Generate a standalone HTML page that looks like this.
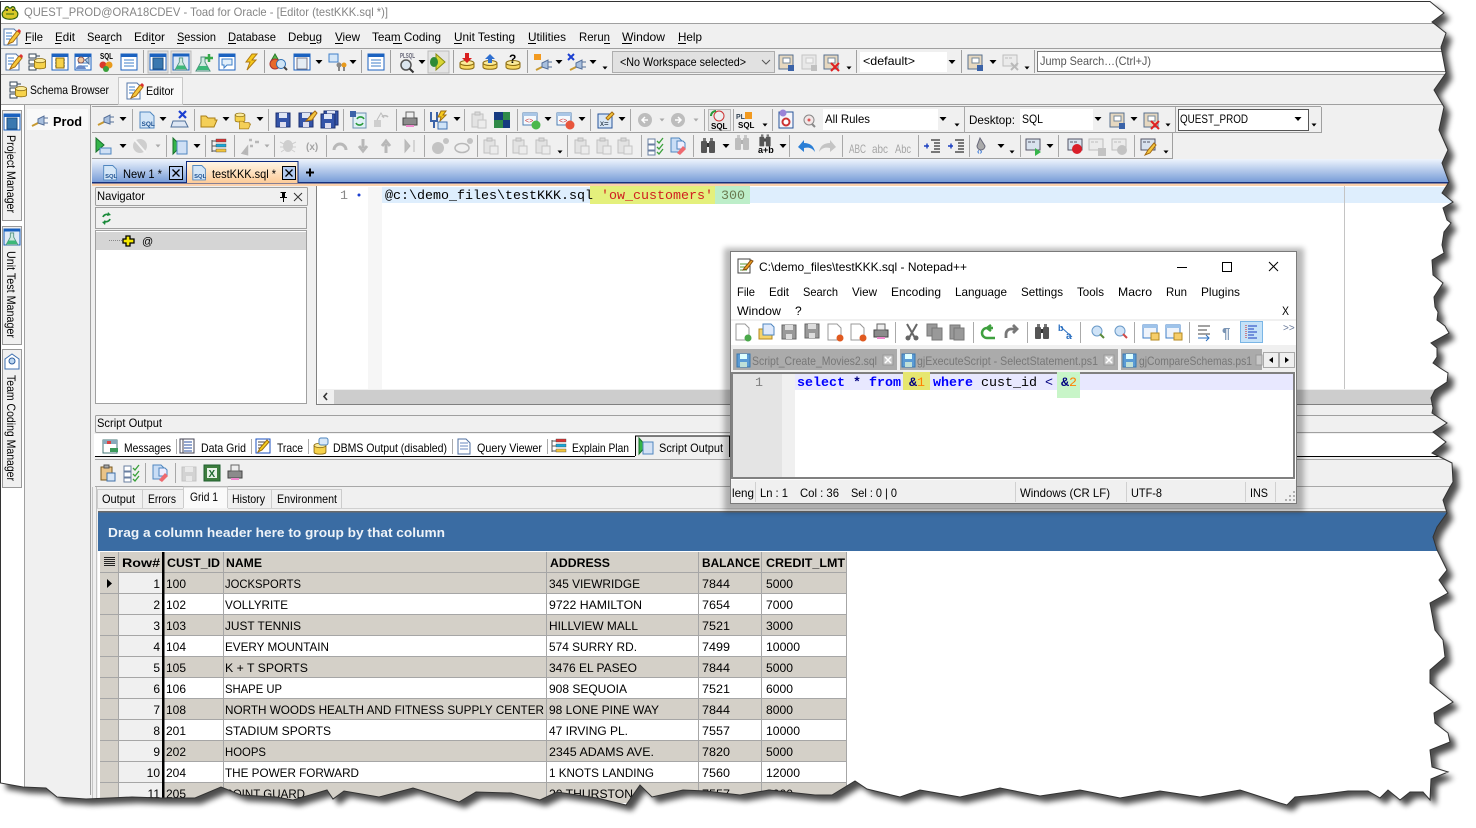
<!DOCTYPE html>
<html><head><meta charset="utf-8"><title>Toad for Oracle</title>
<style>
html,body{margin:0;padding:0;background:#fff;overflow:hidden}
svg{display:block;font-family:"Liberation Sans",sans-serif;font-size:12px;fill:#000}
.g{opacity:.32;filter:grayscale(1)}
.m{font-family:"Liberation Mono",monospace;font-size:13.33px}
.b{font-weight:bold}
</style></head><body>
<svg xmlns="http://www.w3.org/2000/svg" width="1476" height="828" viewBox="0 0 1476 828">
<defs>
<filter id="bl" x="-5%" y="-5%" width="110%" height="110%"><feGaussianBlur stdDeviation="3"/></filter>
<linearGradient id="band" x1="0" y1="0" x2="0" y2="1"><stop offset="0" stop-color="#eef4fd"/><stop offset="1" stop-color="#7399d6"/></linearGradient>
<linearGradient id="act" x1="0" y1="0" x2="0" y2="1"><stop offset="0" stop-color="#fff6e6"/><stop offset="1" stop-color="#fdcb98"/></linearGradient>
<clipPath id="pg"><polygon points="0,1 1430,1 1444,13 1432,22 1446,33 1441,47 1446,73 1434,90 1444,107 1439,130 1448,150 1442,163 1449,182 1442,193 1453,202 1443,208 1447,220 1451,223 1444,232 1442,245 1444,253 1432,260 1433,275 1443,283 1434,297 1435,307 1438,312 1437,320 1445,326 1449,333 1431,343 1437,348 1437,357 1433,363 1440,368 1448,373 1447,382 1435,390 1431,398 1433,408 1432,413 1447,423 1433,432 1446,442 1432,453 1452,463 1453,482 1450,487 1443,500 1447,513 1437,527 1433,537 1437,550 1447,570 1439,580 1448,593 1430,603 1435,630 1443,640 1445,657 1430,670 1430,683 1453,702 1434,713 1435,723 1448,733 1450,742 1430,750 1432,767 1448,772 1431,779 1430,800 1423,792 1410,792 1400,800 1388,790 1380,798 1368,791 1348,791 1317,795 1295,797 1287,805 1280,803 1240,790 1200,797 1160,791 1120,798 1080,790 1040,796 1000,788 960,797 920,790 900,797 867,789 855,781 832,795 815,795 769,790 740,795 706,791 683,790 652,797 640,785 626,805 597,798 557,792 540,800 511,793 476,792 459,802 436,795 413,788 379,797 344,791 333,799 327,790 293,800 276,797 241,795 221,787 195,798 161,798 132,797 109,798 86,799 57,797 46,788 23,787 0,783"/></clipPath>

<path id="ar" d="M-3.5,-2h7l-3.5,4z"/>
<path id="sa" d="M-2.5,-1.5h5l-2.5,3z"/>
<g id="win"><rect x="-8" y="-8" width="16" height="16" fill="#fff" stroke="#1b62c0"/><rect x="-8" y="-8" width="16" height="3" fill="#1b62c0"/><path d="M-5,-2h10M-5,1h10M-5,4h10" stroke="#3f7fc8"/></g>
<g id="book"><rect x="-8" y="-8" width="16" height="16" fill="#fff" stroke="#1b62c0"/><rect x="-8" y="-8" width="16" height="3" fill="#1b62c0"/><rect x="-5" y="-4" width="10" height="11" fill="#3a78b0" stroke="#1d4f80"/></g>
<g id="cyl"><path d="M-7,-3v8c0,3 14,3 14,0v-8z" fill="#f6d24a" stroke="#8a6a10"/><ellipse cy="-3" rx="7" ry="2.6" fill="#fbeb9a" stroke="#8a6a10"/></g>
<g id="pen"><path d="M-7,-8h10l3,3v13h-13z" fill="#fff" stroke="#5577aa"/><path d="M-5,-4h6M-5,-1h6M-5,2h4" stroke="#3f7fc8"/><path d="M-3,7l2,-4 7,-9 3,2 -7,9z" fill="#f6c83c" stroke="#a56a10"/><path d="M6,-6l3,2 1,-2 -2,-2z" fill="#d33"/></g>
<g id="sch"><rect x="-8" y="-8" width="7" height="4" fill="#fff" stroke="#345"/><rect x="-8" y="-2" width="7" height="4" fill="#fff" stroke="#345"/><rect x="-8" y="4" width="7" height="4" fill="#fff" stroke="#345"/><path d="M-1,-6h4" stroke="#345"/><g transform="translate(3,1) scale(.8)"><use href="#cyl"/></g></g>
<g id="flask"><path d="M-2,-6h4v5l5,9h-14l5,-9z" fill="#cfe9e0" stroke="#4f8f80"/><path d="M-4,3h8l2.500,4h-13z" fill="#3cb878"/></g>
<g id="wfl"><rect x="-8" y="-8" width="16" height="16" fill="#dfe9f6" stroke="#1b62c0"/><rect x="-8" y="-8" width="16" height="2.500" fill="#1b62c0"/><g transform="translate(0,1) scale(.85)"><use href="#flask"/></g></g>
<g id="chat"><rect x="-8" y="-8" width="16" height="16" fill="#fff" stroke="#1b62c0"/><rect x="-8" y="-8" width="16" height="3" fill="#1b62c0"/><path d="M-5,-3h10v6h-5l-3,3v-3h-2z" fill="#e2effa" stroke="#3f7fc8"/></g>
<path id="bolt" d="M2,-8h5l-5,6h4l-9,10 3,-8h-4z" fill="#f6c91c" stroke="#b07a10"/>
<g id="shp"><path d="M-3,-8l4,7h-8z" fill="#55b84a" stroke="#2a7a2a"/><circle cx="-3" cy="2" r="5" fill="#e86a2c" stroke="#a33"/><circle cx="3" cy="2" r="4.500" fill="#cfe5f7" stroke="#2d6fb5"/><path d="M6,5l3,3" stroke="#444" stroke-width="2"/></g>
<g id="mag"><circle r="5" fill="#dbe5ee" stroke="#555" stroke-width="1.500"/><path d="M3.500,3.500l4,4" stroke="#333" stroke-width="2"/></g>
<g id="ylw"><path d="M-7,1v4c0,3 14,3 14,0v-4z" fill="#f8d860" stroke="#8a6a10"/><ellipse cy="1" rx="7" ry="2.500" fill="#fbeb9a" stroke="#8a6a10"/></g>
<g id="plug"><path d="M-8,5l6,-3" stroke="#c89a30" stroke-width="2"/><path d="M-2,-2l6,-3v9l-6,-2z" fill="#a9c0de" stroke="#556f99"/><path d="M4,-3h4M4,2h4" stroke="#556f99"/></g>
<g id="sql"><path d="M-7,-8h10l4,4v12h-14z" fill="#d4e6f7" stroke="#4f86bf"/><text x="-5.500" y="6" style="font-size:6.500px;font-weight:bold;fill:#1b4f90">SQL</text></g>
<g id="sv"><rect x="-7" y="-7" width="14" height="14" fill="#3454a8" stroke="#1c2f70"/><rect x="-4" y="-7" width="8" height="5" fill="#dfe6f5"/><rect x="-3" y="2" width="6" height="5" fill="#dde"/></g>
<path id="fo" d="M-8,-4h5l2,2h7v2h2l-3,7h-13z" fill="#f4cf58" stroke="#a97e15"/>
<g id="gd"><rect x="-7" y="-7" width="14" height="15" fill="#fff" stroke="#6b7f9a"/><path d="M-7,-2h14M-7,3h14M-2,-7v15" stroke="#6b7f9a"/></g>
<g id="prt"><rect x="-7" y="-2" width="14" height="7" fill="#8b8b8b" stroke="#444"/><rect x="-4" y="-8" width="8" height="6" fill="#eee" stroke="#666"/><rect x="-4" y="5" width="8" height="2" fill="#e8c"/></g>
<g id="cir"><circle r="7" fill="#bdbdbd"/><path d="M3,0h-6M0,-3l-3,3 3,3" stroke="#fff" stroke-width="1.500" fill="none"/></g>
<g id="play"><path d="M-7,-8l8,7 -8,7z" fill="#35b54a" stroke="#17702a"/><rect x="-3" y="2" width="11" height="6" fill="#cfe0f5" stroke="#4f86bf"/></g>
<g id="tr"><path d="M-6,-6v12M-6,-5h4M-6,0h4M-6,5h4" stroke="#555"/><rect x="-2" y="-7" width="10" height="3" fill="#d33" stroke="#444" stroke-width=".4"/><rect x="-2" y="-2" width="10" height="3" fill="#19a7d8" stroke="#444" stroke-width=".4"/><rect x="-2" y="3" width="10" height="3" fill="#f2c43a" stroke="#444" stroke-width=".4"/></g>
<g id="bug"><ellipse rx="5" ry="6" fill="#888"/><path d="M-8,-4l4,2M8,-4l-4,2M-8,1h4M8,1h-4M-7,6l3,-2M7,6l-3,-2" stroke="#888"/></g>
<g id="cl"><rect x="-7" y="-6" width="11" height="13" fill="#eac489" stroke="#7a5a20"/><rect x="-1" y="0" width="8" height="8" fill="#d8e6f6" stroke="#3f70a8"/><path d="M-4,-8h5v3h-5z" fill="#aaa" stroke="#555"/></g>
<g id="ck"><rect x="-7" y="-7" width="7" height="5" fill="#fff" stroke="#6a7fa0"/><rect x="-7" y="-1" width="7" height="5" fill="#fff" stroke="#6a7fa0"/><rect x="-7" y="5" width="7" height="4" fill="#fff" stroke="#6a7fa0"/><path d="M2,-5l2,2 4,-5M2,1l2,2 4,-5M2,6l2,2 4,-5" stroke="#3aa03a" fill="none" stroke-width="1.300"/></g>
<g id="er"><path d="M-7,-8h8l3,3v11h-11z" fill="#c9ddf5" stroke="#4f86bf"/><path d="M-1,-5h6l2,2v6h-8z" fill="#eef" stroke="#4f86bf"/><path d="M-1,7l6,-7 3,3 -6,6z" fill="#ee6a70"/></g>
<g id="bin"><rect x="-7" y="-5" width="6" height="12" rx="1" fill="#555"/><rect x="1" y="-5" width="6" height="12" rx="1" fill="#555"/><rect x="-5" y="-8" width="3" height="3" fill="#777"/><rect x="2" y="-8" width="3" height="3" fill="#777"/><rect x="-1" y="-3" width="2" height="4" fill="#333"/></g>
<g id="cog"><rect x="-7" y="-7" width="14" height="11" fill="#d8e2ee" stroke="#556"/><path d="M-5,-4h3M-1,-4h3" stroke="#556"/></g>
<g id="rx"><use href="#cog"/><path d="M1,1l7,7M8,1l-7,7" stroke="#e02020" stroke-width="2"/></g>
<g id="cfg"><rect x="-7" y="-7" width="14" height="14" fill="#e6d8c0" stroke="#58708e"/><rect x="-3" y="-4" width="7" height="5" fill="#fff" stroke="#789"/><rect x="2" y="3" width="6" height="6" fill="#3b63a8"/></g>
<g id="cfx"><rect x="-7" y="-7" width="14" height="14" fill="#e6d8c0" stroke="#58708e"/><rect x="-3" y="-4" width="7" height="5" fill="#fff" stroke="#789"/><path d="M0,1l8,8M8,1l-8,8" stroke="#e02020" stroke-width="2"/></g>
<g id="ind"><path d="M-1,-6h9M2,-3h6M2,0h6M2,3h6M-1,6h9" stroke="#000"/><path d="M-8,0h5M-5,-2.500v5" stroke="#1b3fc0" stroke-width="1.400"/></g>
<g id="nd"><path d="M-7,-8h9l4,4v12h-13z" fill="#fff" stroke="#999"/><circle cx="5" cy="6" r="3.500" fill="#4aa84a"/></g>
<g id="nf"><rect x="-7" y="-3" width="13" height="10" fill="#f6d36a" stroke="#b58a20"/><path d="M-3,-8h8l3,3v8h-11z" fill="#dfeafc" stroke="#4f86bf"/></g>
<g id="ns"><rect x="-7" y="-7" width="14" height="14" fill="#999" stroke="#666"/><rect x="-4" y="-7" width="8" height="5" fill="#ddd"/><rect x="-3" y="2" width="6" height="5" fill="#ddd"/></g>
<g id="fl"><rect x="-6" y="-6" width="13" height="13" fill="#5b9bd5" stroke="#3a78b0"/><rect x="-3" y="-6" width="7" height="5" fill="#dff"/><rect x="-3" y="2" width="7" height="5" fill="#bfe0d8"/></g>
<g id="nx"><path d="M-7,-8h9l4,4v12h-13z" fill="#fff" stroke="#999"/><circle cx="5" cy="6" r="3.500" fill="#e05a20"/></g>
<g id="lk"><rect x="-7" y="-7" width="14" height="13" fill="#eef3fb" stroke="#3f7fc8"/><rect x="-7" y="-7" width="14" height="3" fill="#9ec3ea"/><rect x="1" y="1" width="8" height="7" fill="#f6cd6a" stroke="#b58a20"/></g>
</defs>

<rect width="1476" height="828" fill="#fff"/>
<g filter="url(#bl)" opacity=".7" transform="translate(6,6)"><polygon fill="#000" points="900,797 867,789 855,781 832,795 815,795 769,790 740,795 706,791 683,790 652,797 640,785 626,805 597,798 557,792 540,800 511,793 476,792 459,802 436,795 413,788 379,797 344,791 333,799 327,790 293,800 276,797 241,795 221,787 195,798 161,798 132,797 109,798 86,799 57,797 46,788 23,787 0,783 0,1 1430,1 1444,13 1432,22 1446,33 1441,47 1446,73 1434,90 1444,107 1439,130 1448,150 1442,163 1449,182 1442,193 1453,202 1443,208 1447,220 1451,223 1444,232 1442,245 1444,253 1432,260 1433,275 1443,283 1434,297 1435,307 1438,312 1437,320 1445,326 1449,333 1431,343 1437,348 1437,357 1433,363 1440,368 1448,373 1447,382 1435,390 1431,398 1433,408 1432,413 1447,423 1433,432 1446,442 1432,453 1452,463 1453,482 1450,487 1443,500 1447,513 1437,527 1433,537 1437,550 1447,570 1439,580 1448,593 1430,603 1435,630 1443,640 1445,657 1430,670 1430,683 1453,702 1434,713 1435,723 1448,733 1450,742 1430,750 1432,767 1448,772 1431,779 1430,800 1423,792 1410,792 1400,800 1388,790 1380,798 1368,791 1348,791 1317,795 1295,797 1287,805 1280,803 1240,790 1200,797 1160,791 1120,798 1080,790 1040,796 1000,788 960,797 920,790"/></g>

<g clip-path="url(#pg)">
<rect width="1476" height="828" fill="#f0f0f0"/>
<!-- title -->
<rect y="0" width="1476" height="23" fill="#fff"/>
<path d="M0,23.500H1476M0,48.500H1476M0,74.500H1476M0,104.500H1476" stroke="#a0a0a0" fill="none"/>
<g transform="translate(10,12)"><path d="M-7,5c-2,-4 0,-6 2,-7 0,-4 3,-4 4,-2h2c1,-2 4,-2 4,2 2,1 4,3 2,7 -3,3 -11,3 -14,0z" fill="#d8c828" stroke="#2f5f10" stroke-width="1.200"/><path d="M-4,2h8" stroke="#2f6a10"/><circle cx="-3" cy="-2" r="1" fill="#222"/><circle cx="3" cy="-2" r="1" fill="#222"/></g>
<text x="24" y="16" fill="#858585" textLength="364" lengthAdjust="spacingAndGlyphs" style="fill:#858585">QUEST_PROD@ORA18CDEV - Toad for Oracle - [Editor (testKKK.sql *)]</text>

<!-- menu -->
<use href="#pen" x="11" y="37"/>
<g>
<text x="25" y="41" textLength="18" lengthAdjust="spacingAndGlyphs">File</text>
<text x="55" y="41" textLength="20" lengthAdjust="spacingAndGlyphs">Edit</text>
<text x="87" y="41" textLength="35" lengthAdjust="spacingAndGlyphs">Search</text>
<text x="134" y="41" textLength="31" lengthAdjust="spacingAndGlyphs">Editor</text>
<text x="177" y="41" textLength="39" lengthAdjust="spacingAndGlyphs">Session</text>
<text x="228" y="41" textLength="48" lengthAdjust="spacingAndGlyphs">Database</text>
<text x="288" y="41" textLength="34" lengthAdjust="spacingAndGlyphs">Debug</text>
<text x="335" y="41" textLength="25" lengthAdjust="spacingAndGlyphs">View</text>
<text x="372" y="41" textLength="69" lengthAdjust="spacingAndGlyphs">Team Coding</text>
<text x="454" y="41" textLength="61" lengthAdjust="spacingAndGlyphs">Unit Testing</text>
<text x="528" y="41" textLength="38" lengthAdjust="spacingAndGlyphs">Utilities</text>
<text x="579" y="41" textLength="31" lengthAdjust="spacingAndGlyphs">Rerun</text>
<text x="622" y="41" textLength="43" lengthAdjust="spacingAndGlyphs">Window</text>
<text x="678" y="41" textLength="24" lengthAdjust="spacingAndGlyphs">Help</text>
</g>
<path d="M25,43.500h6M55,43.500h6M105,43.500h5M151,43.500h4M177,43.500h7M228,43.500h8M310,43.500h6M335,43.500h8M393,43.500h9M454,43.500h8M528,43.500h8M604,43.500h6M622,43.500h10M678,43.500h8" stroke="#000" fill="none"/>

<!-- toolbar 1 -->
<path d="M143.500,50v23M264.500,50v23M361.500,50v23M390.500,50v23M453.500,50v23M527.500,50v23M856.500,50v23M961.500,50v23M1034.500,50v23" stroke="#a0a0a0"/>
<rect x="148" y="51" width="20" height="22" fill="#e4e4e4" stroke="#bbb"/><rect x="171" y="51" width="20" height="22" fill="#e4e4e4" stroke="#bbb"/><rect x="428" y="51" width="21" height="22" fill="#e4e4e4" stroke="#bbb"/>
<use href="#pen" x="13" y="62"/><use href="#sch" x="37" y="62"/><use href="#win" x="60" y="62"/><rect x="56" y="58" width="8" height="10" fill="#f6d24a" stroke="#8a6a10"/><use href="#win" x="83" y="62"/><circle cx="81" cy="60" r="3" fill="#f0c8a0" stroke="#855"/><path d="M76,69c0,-5 9,-5 10,0z" fill="#6a8ac8"/><path d="M85,60l4,-3v7z" fill="#a9c6e6" stroke="#4f6f99"/>
<text x="100" y="59" class="b" style="font-size:8px" textLength="13" lengthAdjust="spacingAndGlyphs">SQL</text><circle cx="103" cy="65" r="3.500" fill="#d93a2a"/><circle cx="109" cy="65" r="3.500" fill="#e89a1c"/><circle cx="106" cy="69" r="3" fill="#3aa03a"/>
<use href="#win" x="129" y="62"/><use href="#book" x="158" y="62"/><use href="#wfl" x="181" y="62"/>
<use href="#flask" x="203" y="63"/><path d="M205,58h8M209,54v8" stroke="#36a84a" stroke-width="2.500"/>
<use href="#chat" x="227" y="62"/><use href="#bolt" x="250" y="62"/><use href="#shp" x="278" y="62"/><g transform="translate(302,62)"><rect x="-8" y="-8" width="16" height="16" fill="#fff" stroke="#1b62c0"/><rect x="-8" y="-8" width="16" height="3" fill="#1b62c0"/><rect x="-5" y="-4" width="10" height="11" fill="#e4ecf4" stroke="#778"/></g><use href="#ar" x="319" y="62"/>
<g transform="translate(337,62)"><rect x="-8" y="-8" width="9" height="8" fill="#d4e6f7" stroke="#3f7fc8"/><circle cx="2" cy="3" r="2.500" fill="#888"/><circle cx="7" cy="3" r="2.500" fill="#e89a1c"/><path d="M2,5v4M7,5v4" stroke="#666" stroke-width="1.500"/></g>
<use href="#ar" x="353" y="62"/><use href="#win" x="376" y="62"/>
<text x="400" y="58" style="font-size:7px;fill:#667" class="b" textLength="15" lengthAdjust="spacingAndGlyphs">PLSQL</text><use href="#mag" x="406" y="65"/><use href="#ar" x="422" y="62"/>
<g transform="translate(438,62)"><path d="M-2,-8l9,8 -9,8z" fill="#d9d636" stroke="#898a10"/><ellipse cx="-4" rx="4" ry="5" fill="#2f8a38"/></g>
<use href="#ylw" x="467" y="62"/><path d="M467,63l-5,-5h3v-5h4v5h3z" fill="#d92020"/>
<use href="#ylw" x="490" y="62"/><path d="M490,54l5,5h-3v4h-4v-4h-3z" fill="#2f6fd0"/>
<use href="#ylw" x="513" y="62"/><text x="509" y="63" class="b" style="font-size:12px">?</text>
<g transform="translate(542,62)"><use href="#plug" transform="translate(2,3)"/><path d="M-8,-8h7v6h-7z" fill="#f29a20"/></g><use href="#ar" x="559" y="62"/>
<g transform="translate(576,62)"><use href="#plug" transform="translate(2,3)"/><path d="M-8,-8l6,6M-2,-8l-6,6" stroke="#1b3fd0" stroke-width="2"/></g><use href="#ar" x="593" y="62"/><use href="#sa" x="605" y="68"/>
<rect x="612.500" y="51.500" width="162" height="21" fill="#e1e1e1" stroke="#adadad"/>
<text x="620" y="66" textLength="126" lengthAdjust="spacingAndGlyphs">&lt;No Workspace selected&gt;</text>
<path d="M762,60l4,4 4,-4" fill="none" stroke="#555"/>
<use href="#cfg" x="786" y="62"/><g class="g"><use href="#cfg" x="809" y="62"/></g><use href="#cfx" x="831" y="62"/><use href="#sa" x="849" y="68"/>
<rect x="860" y="52" width="98" height="20" fill="#fff"/><rect x="947" y="52" width="11" height="20" fill="#f0f0f0"/>
<text x="863" y="65" textLength="52" lengthAdjust="spacingAndGlyphs">&lt;default&gt;</text><use href="#ar" x="952" y="62"/>
<use href="#cfg" x="975" y="62"/><use href="#ar" x="993" y="62"/><g class="g"><use href="#rx" x="1010" y="62"/></g><use href="#sa" x="1027" y="68"/>
<rect x="1037.500" y="51.500" width="420" height="20" fill="#fff" stroke="#7a7a7a"/>
<text x="1040" y="65" textLength="111" lengthAdjust="spacingAndGlyphs" style="fill:#555">Jump Search…(Ctrl+J)</text>

<!-- schema row -->
<use href="#sch" x="18" y="90"/><text x="30" y="94" textLength="79" lengthAdjust="spacingAndGlyphs">Schema Browser</text>
<rect x="118.500" y="77.500" width="64" height="27" fill="#f8f8f8" stroke="#c8c8c8"/><use href="#pen" x="134" y="91"/><text x="146" y="95" textLength="28" lengthAdjust="spacingAndGlyphs">Editor</text>

<!-- vertical tabs -->
<rect x="0" y="105" width="24" height="690" fill="#fff"/>
<rect x="2.500" y="110.500" width="19" height="110" fill="#f0f0f0" stroke="#999"/><rect x="2.500" y="226.500" width="19" height="118" fill="#f0f0f0" stroke="#999"/><rect x="2.500" y="349.500" width="19" height="138" fill="#f0f0f0" stroke="#999"/>
<use href="#book" x="12" y="122"/><use href="#wfl" x="12" y="237"/>
<g transform="translate(12,362)"><path d="M-7,-3l7,-5 7,5v10h-14z" fill="#fff" stroke="#3f70b0"/><circle r="3" cy="-1" fill="#bcd6f0" stroke="#2f5f9f"/></g>
<text transform="translate(7,135) rotate(90)" textLength="78" lengthAdjust="spacingAndGlyphs">Project Manager</text>
<text transform="translate(7,251) rotate(90)" textLength="87" lengthAdjust="spacingAndGlyphs">Unit Test Manager</text>
<text transform="translate(7,375) rotate(90)" textLength="106" lengthAdjust="spacingAndGlyphs">Team Coding Manager</text>
<path d="M24.500,105v690M90.500,105v690" stroke="#a0a0a0"/>
<rect x="27" y="109" width="61" height="21" fill="#f9f9f9"/>
<use href="#plug" x="40" y="121" transform="translate(0,0)"/><text x="53" y="126" class="b" style="font-size:13px" textLength="29" lengthAdjust="spacingAndGlyphs">Prod</text>

<!-- editor toolbars -->
<path d="M92,106.500H1321M92,132.500H1321M92,158.500H1172M1321.500,107v26M1172.500,133v26" stroke="#a0a0a0" fill="none"/>
<path d="M132.500,109v22M194.500,109v22M268.500,109v22M343.500,109v22M396.500,109v22M424.500,109v22M464.500,109v22M517.500,109v22M590.500,109v22M630.500,109v22M704.500,109v22M733.500,109v22M772.500,109v22M964.500,107v26M1175.500,107v26M166.500,135v22M205.500,135v22M234.500,135v22M274.500,135v22M326.500,135v22M424.500,135v22M477.500,135v22M506.500,135v22M567.500,135v22M641.500,135v22M693.500,135v22M789.500,135v22M842.500,135v22M918.500,135v22M969.500,135v22M1020.500,135v22M1058.500,135v22M1134.500,135v22" stroke="#a8a8a8"/>
<use href="#plug" x="106" y="120"/><use href="#ar" x="123" y="119"/><use href="#sql" x="147" y="120"/><use href="#ar" x="163" y="119"/>
<g transform="translate(180,120)"><path d="M-7,1h12l3,6h-17z" fill="#dde6f3" stroke="#4f6f99"/><path d="M-1,-9l7,7M6,-9l-7,7" stroke="#1b3fd0" stroke-width="2.200"/></g>
<use href="#fo" x="209" y="120"/><use href="#ar" x="226" y="119"/>
<g transform="translate(243,120)"><use href="#cyl" transform="translate(-3,-3) scale(.7)"/><use href="#fo" transform="translate(2,4) scale(.7)"/></g><use href="#ar" x="260" y="119"/>
<use href="#sv" x="283" y="120"/><use href="#sv" x="306" y="120"/><path d="M306,121l5,-6 4,-4 2,2 -5,7z" fill="#f4c640" stroke="#a56a10"/>
<use href="#sv" x="331" y="118"/><use href="#sv" x="328" y="121"/>
<g transform="translate(358,120)"><rect x="-5" y="-7" width="13" height="15" fill="#dff0f5" stroke="#6b90b0"/><rect x="-8" y="-9" width="6" height="6" fill="#3b63a8"/><path d="M-1,-1a4,4 0 0 1 7,0M5,3a4,4 0 0 1 -7,0" fill="none" stroke="#2a9a3a" stroke-width="1.600"/></g>
<g class="g" transform="translate(381,120)"><rect x="-7" y="0" width="7" height="7" fill="#888"/><path d="M1,-3a4,4 0 0 1 6,0" fill="none" stroke="#555" stroke-width="1.600"/><path d="M-4,0l4,-7 3,5" fill="none" stroke="#555"/></g>
<use href="#prt" x="410" y="120"/>
<g transform="translate(438,120)"><path d="M-7,-8v9h6v-9M-4,1v7" stroke="#3b63a8" stroke-width="2" fill="none"/><path d="M3,-9h5l-3,4h3l-6,6 1,-4h-3z" fill="#f6c91c" stroke="#a07010"/><rect x="0" y="2" width="9" height="7" fill="#cfe3f7" stroke="#3f70b0"/></g><use href="#ar" x="457" y="119"/>
<g class="g"><use href="#cl" x="479" y="120"/></g>
<g transform="translate(502,120)"><rect x="-8" y="-8" width="9" height="8" fill="#153a80"/><rect x="1" y="-8" width="7" height="8" fill="#2f8a48"/><rect x="-8" y="0" width="9" height="8" fill="#2f8a48"/><rect x="1" y="0" width="7" height="8" fill="#153a80"/></g>
<g transform="translate(531,120)"><rect x="-8" y="-7" width="14" height="12" fill="#f5f9fd" stroke="#4f7fb5"/><rect x="-8" y="-7" width="14" height="3" fill="#a9c6e6"/><text x="-6" y="3" style="font-size:7px;fill:#c33">&lt;&gt;</text><circle cx="5" cy="5" r="4.500" fill="#4cb84c"/></g><use href="#ar" x="548" y="119"/>
<g transform="translate(565,120)"><rect x="-8" y="-7" width="14" height="12" fill="#f5f9fd" stroke="#4f7fb5"/><rect x="-8" y="-7" width="14" height="3" fill="#a9c6e6"/><text x="-6" y="3" style="font-size:7px;fill:#c33">&lt;&gt;</text><circle cx="5" cy="5" r="4.500" fill="#e8553c"/></g><use href="#ar" x="582" y="119"/>
<g transform="translate(606,120)"><rect x="-8" y="-6" width="14" height="14" fill="#d8e6f6" stroke="#27559a"/><text x="-6" y="6" style="font-size:8px;fill:#123">x=</text><path d="M0,-2l6,-6 2,2 -6,6z" fill="#f4c640" stroke="#a56a10"/></g><use href="#ar" x="622" y="119"/>
<use href="#cir" x="645" y="120"/><use href="#sa" x="662" y="120" fill="#aaa"/><g transform="translate(678,120) scale(-1,1)"><use href="#cir"/></g><use href="#sa" x="696" y="120" fill="#aaa"/>
<rect x="708.500" y="109.500" width="22" height="21" fill="#e8e8e8" stroke="#bbb"/>
<g transform="translate(719,116)"><circle r="5" fill="#eee" stroke="#c33"/><path d="M-8,0a5,5 0 0 1 5,-5" stroke="#2a9a3a" stroke-width="2" fill="none"/></g><text x="711" y="129" class="b" style="font-size:8px">SQL</text>
<text x="736" y="119" class="b" style="font-size:7px;fill:#345">PL</text><rect x="745" y="112" width="7" height="7" fill="#f29a20"/><text x="738" y="128" class="b" style="font-size:8px">SQL</text><use href="#sa" x="765" y="125"/>
<g transform="translate(786,120)"><rect x="-7" y="-8" width="14" height="16" fill="#f5f5fb" stroke="#27559a"/><circle cx="-3" cy="-7" r="3.500" fill="#9a83d8"/><circle cy="2" r="3.500" fill="#fff" stroke="#c33" stroke-width="2"/></g>
<g transform="translate(809,120)"><circle r="5" fill="#f1e6e6" stroke="#888"/><path d="M3,4l3,3" stroke="#888" stroke-width="2"/><circle r="1.500" fill="#d55"/></g>
<rect x="823" y="109" width="125" height="21" fill="#fff"/><rect x="938" y="109" width="10" height="21" fill="#f0f0f0"/>
<text x="825" y="123" textLength="45" lengthAdjust="spacingAndGlyphs">All Rules</text><use href="#ar" x="943" y="119"/><use href="#sa" x="957" y="125"/>
<text x="969" y="124" textLength="46" lengthAdjust="spacingAndGlyphs">Desktop:</text>
<rect x="1020" y="109" width="83" height="21" fill="#fff"/><rect x="1093" y="109" width="10" height="21" fill="#f0f0f0"/>
<text x="1022" y="123" textLength="21" lengthAdjust="spacingAndGlyphs">SQL</text><use href="#ar" x="1098" y="119"/>
<use href="#cfg" x="1117" y="120"/><use href="#ar" x="1134" y="119"/><use href="#cfx" x="1151" y="120"/><use href="#sa" x="1168" y="125"/>
<rect x="1178.500" y="109.500" width="130" height="21" fill="#fff" stroke="#555"/><text x="1180" y="123" textLength="68" lengthAdjust="spacingAndGlyphs">QUEST_PROD</text><use href="#ar" x="1298" y="119"/><use href="#sa" x="1314" y="125"/>

<use href="#play" x="103" y="146"/><use href="#ar" x="123" y="146"/><g class="g"><circle cx="140" cy="146" r="7" fill="#888"/><path d="M134,139l12,14" stroke="#fff" stroke-width="2"/></g><use href="#sa" x="158" y="146" fill="#aaa"/>
<g transform="translate(180,146)"><path d="M-7,-8l8,8 -8,8z" fill="#35b54a" stroke="#17702a"/><rect x="-3" y="-5" width="10" height="13" fill="#cfe0f5" stroke="#4f86bf"/></g><use href="#ar" x="197" y="146"/>
<use href="#tr" x="218" y="146"/>
<g class="g"><path d="M243,153l4,-5v6zM249,140h3M255,142h4M250,146h3" stroke="#444" stroke-width="2.500"/><use href="#bug" x="288" y="146"/><text x="306" y="150" class="b" style="font-size:10px">(x)</text><path d="M334,150a6,6 0 0 1 12,0" fill="none" stroke="#444" stroke-width="3"/><path d="M363,139v9M359,146l4,5 4,-5" stroke="#444" stroke-width="3" fill="none"/><path d="M386,153v-9M382,146l4,-5 4,5" stroke="#444" stroke-width="3" fill="none"/><path d="M405,140l5,6 -5,6zM414,140v12" fill="#555" stroke="#444"/><circle cx="438" cy="148" r="6" fill="#666"/><circle cx="446" cy="141" r="3" fill="#666"/><ellipse cx="462" cy="148" rx="7" ry="4.500" fill="none" stroke="#444" stroke-width="1.500"/><circle cx="470" cy="141" r="3" fill="#666"/><use href="#cl" x="491" y="146"/><use href="#cl" x="520" y="146"/><use href="#cl" x="543" y="146"/><use href="#cl" x="582" y="146"/><use href="#cl" x="604" y="146"/><use href="#cl" x="625" y="146"/></g>
<use href="#sa" x="267" y="146" fill="#aaa"/><use href="#sa" x="560" y="152"/>
<use href="#ck" x="655" y="146"/><use href="#er" x="678" y="146"/><use href="#bin" x="708" y="146"/><use href="#ar" x="726" y="146"/>
<g class="g"><use href="#bin" x="742" y="143"/></g><use href="#bin" x="765" y="141" transform="translate(153,28) scale(.8)"/><text x="758" y="153" style="font-size:9px" class="b">a+b</text><use href="#ar" x="783" y="146"/>
<path d="M798,147l6,-7v3c6,0 10,3 11,9c-3,-4 -6,-5 -11,-4v4z" fill="#2b7fd6"/>
<path d="M836,147l-6,-7v3c-6,0 -10,3 -11,9c3,-4 6,-5 11,-4v4z" fill="#c4c4c4"/>
<g class="g" style="font-size:12px"><text x="849" y="153" textLength="17" lengthAdjust="spacingAndGlyphs">ABC</text><text x="872" y="153" textLength="16" lengthAdjust="spacingAndGlyphs">abc</text><text x="895" y="153" textLength="16" lengthAdjust="spacingAndGlyphs">Abc</text></g>
<use href="#ind" x="932" y="146"/><use href="#ind" x="956" y="146"/>
<g transform="translate(983,146)"><path d="M-3,-8l5,8a4,4 0 0 1 -8,0z" fill="#aaa" stroke="#667"/><text x="-6" y="8" style="font-size:8px;fill:#2b6fd6" class="b">‹›</text></g><use href="#ar" x="1001" y="146"/><use href="#sa" x="1012" y="152"/>
<g transform="translate(1033,146)"><use href="#cog"/><path d="M2,2l6,4 -6,4z" fill="#35b54a"/></g><use href="#ar" x="1050" y="146"/>
<g transform="translate(1075,146)"><use href="#cog"/><circle cx="2" cy="3" r="5" fill="#d91e2a"/></g><g class="g"><use href="#cog" x="1096" y="146"/><rect x="1098" y="148" width="8" height="8" fill="#666"/><use href="#cog" x="1119" y="146"/><circle cx="1122" cy="150" r="5" fill="#666"/></g>
<g transform="translate(1148,146)"><use href="#cog"/><path d="M-3,9l3,-5 6,-7 2,2 -6,8z" fill="#f4c640" stroke="#a56a10"/></g><use href="#sa" x="1166" y="152"/>

<!-- document tabs -->
<rect x="92" y="159" width="1370" height="24" fill="url(#band)"/>
<rect x="92" y="182" width="1370" height="1.500" fill="#16307e"/><rect x="92" y="183.500" width="1370" height="2.500" fill="#fbd0ab"/>
<use href="#sql" x="110" y="173" transform="translate(11,17) scale(.9)"/><text x="123" y="178" textLength="39" lengthAdjust="spacingAndGlyphs">New 1 *</text>
<rect x="169.500" y="166.500" width="13" height="13" fill="#b4cbf2" stroke="#000"/><path d="M172.500,169.500l7,7M179.500,169.500l-7,7" stroke="#000" stroke-width="1.300"/>
<path d="M186.500,183v-21.500h111.500v21.500" fill="url(#act)" stroke="#0c2a80"/>
<use href="#sql" x="199" y="173" transform="translate(20,17) scale(.9)"/><text x="212" y="178" textLength="64" lengthAdjust="spacingAndGlyphs">testKKK.sql *</text>
<rect x="282.500" y="166.500" width="13" height="13" fill="#b4cbf2" stroke="#000"/><path d="M285.500,169.500l7,7M292.500,169.500l-7,7" stroke="#000" stroke-width="1.300"/>
<path d="M306,172.500h8M310,168.500v8" stroke="#000" stroke-width="2"/>

<!-- navigator -->
<rect x="95.500" y="187.500" width="212" height="18" rx="1" fill="#f0f0f0" stroke="#a0a0a0"/><text x="97" y="200" textLength="48" lengthAdjust="spacingAndGlyphs">Navigator</text>
<path d="M280,192h6v1h-1v4h2v1h-3v4h-1v-4h-3v-1h2v-4h-1z"/><path d="M294,193l8,8M302,193l-8,8" stroke="#333"/>
<rect x="95.500" y="207.500" width="211" height="21" fill="#f0f0f0" stroke="#a0a0a0"/><path d="M103,217a4,4 0 0 1 6,-2M110,219a4,4 0 0 1 -6,2" fill="none" stroke="#1a8a3a" stroke-width="1.700"/><path d="M108,212l3,3 -4,1zM105,225l-3,-3 4,-1z" fill="#1a8a3a"/>
<rect x="95.500" y="230.500" width="211" height="173" fill="#fff" stroke="#a0a0a0"/><rect x="96" y="232" width="210" height="18" fill="#d5d5d5"/>
<path d="M109,240.500h13" stroke="#888" stroke-dasharray="1 1"/><path d="M126,236h4v3h4v4h-4v3h-4v-3h-3v-4h3z" fill="#f4e800" stroke="#000" stroke-width="1.300"/><text x="142" y="245" style="font-size:11px">@</text>

<!-- editor -->
<rect x="317" y="186" width="1135" height="218" fill="#fff"/><path d="M316.500,186v218.500h1135" fill="none" stroke="#808080"/>
<rect x="368" y="187" width="14" height="202" fill="#f6f6f6"/>
<rect x="382" y="187" width="1070" height="16" fill="#deeefd"/>
<rect x="590" y="186" width="125" height="18" fill="#e4f07c"/><rect x="715" y="186" width="35" height="18" fill="#bdeec9"/>
<text x="340" y="199" fill="#888" class="m" style="fill:#888">1</text><circle cx="359" cy="195" r="1.500" fill="#1b3fd0"/>
<text x="385" y="199" class="m">@<tspan style="fill:#000">c:\demo_files\testKKK.sql</tspan> <tspan style="fill:#d02020">'ow_customers'</tspan> <tspan style="fill:#6a7a50">300</tspan></text>
<path d="M1344.500,186v204" stroke="#c4c4c4"/>
<rect x="318" y="389" width="1130" height="15" fill="#f0f0f0"/><rect x="334" y="390" width="1100" height="14" fill="#cdcdcd"/><path d="M327,393l-3,3.500 3,3.500" fill="none" stroke="#333" stroke-width="1.600"/>

<!-- script output header -->
<rect x="95.500" y="415.500" width="1400" height="17" rx="1" fill="#f0f0f0" stroke="#a0a0a0"/><text x="97" y="427" textLength="65" lengthAdjust="spacingAndGlyphs">Script Output</text>
<rect x="94" y="434" width="1370" height="22" fill="#fff"/>
<path d="M95,456.500H635M729,456.500H1470" stroke="#000" fill="none"/>
<path d="M635.500,456v-20h94v20" fill="#f0f0f0" stroke="#000"/>
<path d="M176.500,439v15M251.500,439v15M308.500,439v15M452.500,439v15M547.500,439v15" stroke="#aaa"/>
<g transform="translate(110,447)"><rect x="-7" y="-7" width="14" height="13" fill="#fff" stroke="#477"/><rect x="-7" y="-7" width="14" height="4" fill="#8ab"/><rect x="0" y="1" width="8" height="4" fill="#3a9a5a"/><rect x="-3" y="-6" width="4" height="3" fill="#d44"/></g><text x="124" y="452" textLength="47" lengthAdjust="spacingAndGlyphs">Messages</text>
<g transform="translate(187,446)"><rect x="-7" y="-7" width="14" height="14" fill="#fff" stroke="#445"/><path d="M-3,-4h8M-3,-1h8M-3,2h8M-3,5h8" stroke="#2a4fa0"/><path d="M-4,-7v14" stroke="#445"/></g><text x="201" y="452" textLength="45" lengthAdjust="spacingAndGlyphs">Data Grid</text>
<g transform="translate(263,446)"><rect x="-7" y="-7" width="14" height="14" fill="#fff" stroke="#1b50c0"/><path d="M-5,-4h9M-5,-1h6M-5,2h5" stroke="#444"/><path d="M-5,6l2,-4 7,-8 2,2 -7,8z" fill="#f6d020" stroke="#a07010"/></g><text x="277" y="452" textLength="26" lengthAdjust="spacingAndGlyphs">Trace</text>
<g transform="translate(320,448)"><use href="#cyl" transform="scale(.85)"/><rect x="-1" y="-10" width="9" height="7" rx="2" fill="#d8e8f8" stroke="#4f86bf"/></g><text x="333" y="452" textLength="114" lengthAdjust="spacingAndGlyphs">DBMS Output (disabled)</text>
<g transform="translate(464,446)"><path d="M-6,-7h8l4,4v11h-12z" fill="#fff" stroke="#4f6fa0"/><path d="M-4,-3h8M-4,0h8M-4,3h8" stroke="#6a8ac0"/></g><text x="477" y="452" textLength="65" lengthAdjust="spacingAndGlyphs">Query Viewer</text>
<use href="#tr" x="558" y="446"/><text x="572" y="452" textLength="57" lengthAdjust="spacingAndGlyphs">Explain Plan</text>
<g transform="translate(646,446)"><path d="M-7,-8l7,8 -7,8z" fill="#35b54a" stroke="#17702a"/><rect x="-3" y="-4" width="10" height="12" fill="#d4e2f5" stroke="#4f86bf"/></g><text x="659" y="452" textLength="64" lengthAdjust="spacingAndGlyphs">Script Output</text>

<!-- output toolbar -->
<path d="M95,459.500H1462M95,486.500H1462" stroke="#a8a8a8"/><path d="M145.500,463v20M175.500,463v20" stroke="#a8a8a8"/>
<use href="#cl" x="108" y="473"/><use href="#ck" x="131" y="473"/><use href="#er" x="160" y="473"/>
<g class="g"><use href="#ns" x="189" y="474"/></g>
<g transform="translate(212,473)"><rect x="-8" y="-8" width="16" height="16" fill="#3d7d3d" stroke="#1f5f2f"/><rect x="-5" y="-5" width="10" height="10" fill="#e8f2e8"/><text x="-3.500" y="4" class="b" style="font-size:10px;fill:#1f6a2f">X</text></g>
<use href="#prt" x="235" y="473"/>

<!-- sub tabs -->
<path d="M97.500,508v-18.500h45v18.500M142.500,508v-18.500h41M227.500,489.500h44v18.500M271.500,489.500h70v18.500" fill="none" stroke="#ccc"/>
<path d="M183.500,508v-21h44v21" fill="#fafafa" stroke="#ccc"/>
<path d="M96,508.500H183M228,508.500H1470" stroke="#d0d0d0"/>
<text x="102" y="503" textLength="33" lengthAdjust="spacingAndGlyphs">Output</text><text x="148" y="503" textLength="28" lengthAdjust="spacingAndGlyphs">Errors</text><text x="190" y="501" textLength="28" lengthAdjust="spacingAndGlyphs">Grid 1</text><text x="232" y="503" textLength="33" lengthAdjust="spacingAndGlyphs">History</text><text x="277" y="503" textLength="60" lengthAdjust="spacingAndGlyphs">Environment</text>

<!-- grid -->
<rect x="98" y="511" width="1370" height="300" fill="#fff"/>
<rect x="98" y="511" width="1370" height="40" fill="#3a6ca3"/><rect x="98" y="511" width="1370" height="1.500" fill="#6a6a6a"/>
<text x="108" y="537" class="b" style="font-size:13px;fill:#eef3f8" textLength="337" lengthAdjust="spacingAndGlyphs">Drag a column header here to group by that column</text>
<rect x="100" y="552" width="746" height="21" fill="#d4d0c8"/>
<rect x="119" y="573" width="43" height="230" fill="#f0f0f0"/><rect x="100" y="573" width="19" height="230" fill="#d4d0c8"/>
<g fill="#d4d0c8"><rect x="164" y="573" width="682" height="20"/><rect x="164" y="615" width="682" height="20"/><rect x="164" y="657" width="682" height="20"/><rect x="164" y="699" width="682" height="20"/><rect x="164" y="741" width="682" height="20"/><rect x="164" y="783" width="682" height="20"/></g>
<path d="M100,572.500H846M100,593.500H846M100,614.500H846M100,635.500H846M100,656.500H846M100,677.500H846M100,698.500H846M100,719.500H846M100,740.500H846M100,761.500H846M100,782.500H846M118.500,552V803M223.500,552V803M546.500,552V803M698.500,552V803M761.500,552V803M846.500,552V803" stroke="#a6a6a6" fill="none"/>
<rect x="162" y="552" width="2.500" height="251" fill="#000"/>
<path d="M104,557.500h11M104,559.500h11M104,561.500h11M104,563.500h11M104,565.500h11" stroke="#222"/>
<path d="M107,579l5,4.500 -5,4.500z" fill="#000"/>
<g class="b"><text x="122" y="567" textLength="38" lengthAdjust="spacingAndGlyphs">Row#</text><text x="167" y="567" textLength="53" lengthAdjust="spacingAndGlyphs">CUST_ID</text><text x="226" y="567" textLength="36" lengthAdjust="spacingAndGlyphs">NAME</text><text x="550" y="567" textLength="60" lengthAdjust="spacingAndGlyphs">ADDRESS</text><text x="702" y="567" textLength="58" lengthAdjust="spacingAndGlyphs">BALANCE</text><text x="766" y="567" textLength="79" lengthAdjust="spacingAndGlyphs">CREDIT_LMT</text></g>
<g text-anchor="end"><text x="160" y="588">1</text><text x="160" y="609">2</text><text x="160" y="630">3</text><text x="160" y="651">4</text><text x="160" y="672">5</text><text x="160" y="693">6</text><text x="160" y="714">7</text><text x="160" y="735">8</text><text x="160" y="756">9</text><text x="160" y="777">10</text><text x="160" y="798">11</text></g>
<g>
<text x="166" y="588" textLength="20" lengthAdjust="spacingAndGlyphs">100</text><text x="225" y="588" textLength="76" lengthAdjust="spacingAndGlyphs">JOCKSPORTS</text><text x="549" y="588" textLength="91" lengthAdjust="spacingAndGlyphs">345 VIEWRIDGE</text><text x="702" y="588" textLength="28" lengthAdjust="spacingAndGlyphs">7844</text><text x="766" y="588" textLength="27" lengthAdjust="spacingAndGlyphs">5000</text>
<text x="166" y="609" textLength="20" lengthAdjust="spacingAndGlyphs">102</text><text x="225" y="609" textLength="63" lengthAdjust="spacingAndGlyphs">VOLLYRITE</text><text x="549" y="609" textLength="93" lengthAdjust="spacingAndGlyphs">9722 HAMILTON</text><text x="702" y="609" textLength="28" lengthAdjust="spacingAndGlyphs">7654</text><text x="766" y="609" textLength="27" lengthAdjust="spacingAndGlyphs">7000</text>
<text x="166" y="630" textLength="20" lengthAdjust="spacingAndGlyphs">103</text><text x="225" y="630" textLength="76" lengthAdjust="spacingAndGlyphs">JUST TENNIS</text><text x="549" y="630" textLength="89" lengthAdjust="spacingAndGlyphs">HILLVIEW MALL</text><text x="702" y="630" textLength="28" lengthAdjust="spacingAndGlyphs">7521</text><text x="766" y="630" textLength="27" lengthAdjust="spacingAndGlyphs">3000</text>
<text x="166" y="651" textLength="20" lengthAdjust="spacingAndGlyphs">104</text><text x="225" y="651" textLength="104" lengthAdjust="spacingAndGlyphs">EVERY MOUNTAIN</text><text x="549" y="651" textLength="88" lengthAdjust="spacingAndGlyphs">574 SURRY RD.</text><text x="702" y="651" textLength="28" lengthAdjust="spacingAndGlyphs">7499</text><text x="766" y="651" textLength="34" lengthAdjust="spacingAndGlyphs">10000</text>
<text x="166" y="672" textLength="20" lengthAdjust="spacingAndGlyphs">105</text><text x="225" y="672" textLength="83" lengthAdjust="spacingAndGlyphs">K + T SPORTS</text><text x="549" y="672" textLength="88" lengthAdjust="spacingAndGlyphs">3476 EL PASEO</text><text x="702" y="672" textLength="28" lengthAdjust="spacingAndGlyphs">7844</text><text x="766" y="672" textLength="27" lengthAdjust="spacingAndGlyphs">5000</text>
<text x="166" y="693" textLength="20" lengthAdjust="spacingAndGlyphs">106</text><text x="225" y="693" textLength="57" lengthAdjust="spacingAndGlyphs">SHAPE UP</text><text x="549" y="693" textLength="78" lengthAdjust="spacingAndGlyphs">908 SEQUOIA</text><text x="702" y="693" textLength="28" lengthAdjust="spacingAndGlyphs">7521</text><text x="766" y="693" textLength="27" lengthAdjust="spacingAndGlyphs">6000</text>
<text x="166" y="714" textLength="20" lengthAdjust="spacingAndGlyphs">108</text><text x="225" y="714" textLength="319" lengthAdjust="spacingAndGlyphs">NORTH WOODS HEALTH AND FITNESS SUPPLY CENTER</text><text x="549" y="714" textLength="110" lengthAdjust="spacingAndGlyphs">98 LONE PINE WAY</text><text x="702" y="714" textLength="28" lengthAdjust="spacingAndGlyphs">7844</text><text x="766" y="714" textLength="27" lengthAdjust="spacingAndGlyphs">8000</text>
<text x="166" y="735" textLength="20" lengthAdjust="spacingAndGlyphs">201</text><text x="225" y="735" textLength="106" lengthAdjust="spacingAndGlyphs">STADIUM SPORTS</text><text x="549" y="735" textLength="79" lengthAdjust="spacingAndGlyphs">47 IRVING PL.</text><text x="702" y="735" textLength="28" lengthAdjust="spacingAndGlyphs">7557</text><text x="766" y="735" textLength="34" lengthAdjust="spacingAndGlyphs">10000</text>
<text x="166" y="756" textLength="20" lengthAdjust="spacingAndGlyphs">202</text><text x="225" y="756" textLength="41" lengthAdjust="spacingAndGlyphs">HOOPS</text><text x="549" y="756" textLength="105" lengthAdjust="spacingAndGlyphs">2345 ADAMS AVE.</text><text x="702" y="756" textLength="28" lengthAdjust="spacingAndGlyphs">7820</text><text x="766" y="756" textLength="27" lengthAdjust="spacingAndGlyphs">5000</text>
<text x="166" y="777" textLength="20" lengthAdjust="spacingAndGlyphs">204</text><text x="225" y="777" textLength="134" lengthAdjust="spacingAndGlyphs">THE POWER FORWARD</text><text x="549" y="777" textLength="105" lengthAdjust="spacingAndGlyphs">1 KNOTS LANDING</text><text x="702" y="777" textLength="28" lengthAdjust="spacingAndGlyphs">7560</text><text x="766" y="777" textLength="34" lengthAdjust="spacingAndGlyphs">12000</text>
<text x="166" y="798" textLength="20" lengthAdjust="spacingAndGlyphs">205</text><text x="225" y="798" textLength="80" lengthAdjust="spacingAndGlyphs">POINT GUARD</text><text x="549" y="798" textLength="84" lengthAdjust="spacingAndGlyphs">20 THURSTON</text><text x="702" y="798" textLength="28" lengthAdjust="spacingAndGlyphs">7557</text><text x="766" y="798" textLength="27" lengthAdjust="spacingAndGlyphs">3000</text>
</g>
<path d="M92.500,487V803M96.500,487V803" stroke="#c4c4c4"/>

<!-- notepad++ -->
<rect x="724" y="248" width="580" height="264" fill="#000" opacity=".28" filter="url(#bl)"/>
<rect x="730" y="252" width="567" height="252" fill="#fff"/>
<rect x="731" y="319" width="565" height="2" fill="#f0f0f0"/>
<rect x="731" y="345" width="565" height="27" fill="#f0f0f0"/>
<g transform="translate(745,266)"><path d="M-7,-7h12v14h-12z" fill="#fff" stroke="#444"/><path d="M-5,-2h7M-5,1h7M-5,4h7" stroke="#5a9a3a"/><path d="M-2,4l2,-3 6,-7 2,1 -6,8z" fill="#f0a020" stroke="#885010"/></g>
<text x="759" y="271" textLength="208" lengthAdjust="spacingAndGlyphs">C:\demo_files\testKKK.sql - Notepad++</text>
<path d="M1177,267.500h10" stroke="#000"/><rect x="1222.500" y="262.500" width="9" height="9" fill="none" stroke="#000"/><path d="M1269,262l9,9M1278,262l-9,9" stroke="#000"/>
<g>
<text x="737" y="296" textLength="18" lengthAdjust="spacingAndGlyphs">File</text><text x="769" y="296" textLength="20" lengthAdjust="spacingAndGlyphs">Edit</text><text x="803" y="296" textLength="35" lengthAdjust="spacingAndGlyphs">Search</text><text x="852" y="296" textLength="25" lengthAdjust="spacingAndGlyphs">View</text><text x="891" y="296" textLength="50" lengthAdjust="spacingAndGlyphs">Encoding</text><text x="955" y="296" textLength="52" lengthAdjust="spacingAndGlyphs">Language</text><text x="1021" y="296" textLength="42" lengthAdjust="spacingAndGlyphs">Settings</text><text x="1077" y="296" textLength="27" lengthAdjust="spacingAndGlyphs">Tools</text><text x="1118" y="296" textLength="34" lengthAdjust="spacingAndGlyphs">Macro</text><text x="1166" y="296" textLength="21" lengthAdjust="spacingAndGlyphs">Run</text><text x="1201" y="296" textLength="39" lengthAdjust="spacingAndGlyphs">Plugins</text>
<text x="737" y="315" textLength="44" lengthAdjust="spacingAndGlyphs">Window</text><text x="795" y="315">?</text><text x="1282" y="315" textLength="7" lengthAdjust="spacingAndGlyphs">X</text>
</g>
<use href="#nd" x="743" y="332"/><use href="#nf" x="766" y="332"/><use href="#ns" x="789" y="332"/><use href="#ns" x="812" y="331"/><use href="#nx" x="835" y="332"/><use href="#nx" x="858" y="332"/><use href="#prt" x="881" y="332"/>
<path d="M895.500,322v21M973.500,322v21M1027.500,322v21M1080.500,322v21M1134.500,322v21M1189.500,322v21" stroke="#aaa"/>
<g transform="translate(912,332)"><path d="M-5,-8l8,14M5,-8l-8,14" stroke="#666" stroke-width="2"/><circle cx="-4" cy="6" r="2.500" fill="#666"/><circle cx="4" cy="6" r="2.500" fill="#666"/></g>
<g fill="#999" stroke="#777"><rect x="927" y="324" width="10" height="12"/><rect x="932" y="328" width="10" height="12"/><rect x="950" y="325" width="10" height="14"/><rect x="954" y="328" width="10" height="12"/></g>
<path d="M993,328h-6a5,5 0 0 0 0,10h8M991,325l-4,3 4,3" fill="none" stroke="#3fa03f" stroke-width="2.500"/>
<path d="M1006,338v-4a5,5 0 0 1 5,-5h5M1013,325l4,4 -4,4" fill="none" stroke="#777" stroke-width="2.800"/>
<use href="#bin" x="1042" y="332"/><g transform="translate(1066,332)"><text x="-8" y="-1" style="font-size:9px;fill:#2a6fc0" class="b">b</text><text x="0" y="7" style="font-size:10px;fill:#2a6fc0" class="b">a</text><path d="M-5,-5l11,10" stroke="#2a6fc0"/></g>
<g transform="translate(1097,331)"><circle r="5" fill="#cfe3f7" stroke="#6a9ac8"/><path d="M3,3l4,4" stroke="#5a8a3a" stroke-width="2"/></g><g transform="translate(1120,331)"><circle r="5" fill="#cfe3f7" stroke="#6a9ac8"/><path d="M3,3l4,4" stroke="#d04a4a" stroke-width="2"/></g>
<use href="#lk" x="1150" y="332"/><use href="#lk" x="1173" y="332"/>
<g transform="translate(1205,332)"><path d="M-7,-6h12M-7,-2h9M-7,2h12" stroke="#444"/><path d="M-7,6h11M1,3l3,3 -3,3" fill="none" stroke="#2a6fc0"/></g>
<text x="1222" y="338" style="font-size:15px;fill:#7a94b4" class="b">¶</text>
<rect x="1240.500" y="321.500" width="22" height="21" fill="#c5e2f8" stroke="#7ab6e6"/><g transform="translate(1251,332)"><path d="M-5,-7v14" stroke="#d02020" stroke-dasharray="1 1"/><path d="M-3,-6h9M-3,-3h6M-3,0h9M-3,3h6M-3,6h9" stroke="#1b3fc0"/></g>
<text x="1283" y="331" style="font-size:10px;fill:#6a7a9a">&gt;&gt;</text>
<rect x="733" y="349" width="164" height="21" fill="#ababab"/><rect x="900" y="349" width="218" height="21" fill="#ababab"/><rect x="1121" y="349" width="141" height="21" fill="#ababab"/>
<use href="#fl" x="743" y="360"/><use href="#fl" x="908" y="360"/><use href="#fl" x="1129" y="360"/>
<g style="fill:#7a7a7a"><text x="752" y="365" style="fill:#777" textLength="125" lengthAdjust="spacingAndGlyphs">Script_Create_Movies2.sql</text><text x="917" y="365" style="fill:#777" textLength="181" lengthAdjust="spacingAndGlyphs">gjExecuteScript - SelectStatement.ps1</text><text x="1139" y="365" style="fill:#777" textLength="113" lengthAdjust="spacingAndGlyphs">gjCompareSchemas.ps1</text></g>
<g fill="#c8c8c8" stroke="#999"><rect x="883" y="355" width="10" height="10"/><rect x="1104" y="355" width="10" height="10"/><rect x="1256" y="355" width="6" height="10"/></g>
<path d="M885,357l6,6M891,357l-6,6M1106,357l6,6M1112,357l-6,6" stroke="#fff" stroke-width="1.500"/>
<rect x="1263.500" y="352.500" width="15" height="15" fill="#f0f0f0" stroke="#aaa"/><rect x="1279.500" y="352.500" width="15" height="15" fill="#f0f0f0" stroke="#aaa"/><path d="M1273,357l-4,3 4,3zM1285,357l4,3 -4,3z"/>
<rect x="732" y="373" width="562" height="105" fill="#fff" stroke="#808080" stroke-width="2"/>
<rect x="733" y="374" width="49" height="103" fill="#e4e4e4"/><rect x="782" y="374" width="13" height="103" fill="#f0f0f0"/>
<rect x="795" y="374" width="498" height="16" fill="#e8e8ff"/><rect x="903" y="372" width="27" height="18" fill="#e6e670"/><rect x="1057" y="372" width="23" height="26" fill="#c8f5c8"/>
<text x="755" y="386" class="m" style="fill:#808080">1</text>
<text x="797" y="386" class="m"><tspan class="b" style="fill:#0000ff">select</tspan> <tspan class="b" style="fill:#000080">*</tspan> <tspan class="b" style="fill:#0000ff">from</tspan> <tspan class="b" style="fill:#000080">&amp;</tspan><tspan style="fill:#ff8000">1</tspan> <tspan class="b" style="fill:#0000ff">where</tspan> cust_id <tspan style="fill:#000080">&lt;</tspan> <tspan class="b" style="fill:#000080">&amp;</tspan><tspan style="fill:#ff8000">2</tspan></text>
<rect x="731" y="480" width="565" height="23" fill="#f0f0f0"/>
<path d="M755.500,482v20M1015.500,482v20M1126.500,482v20M1245.500,482v20M1275.500,482v20" stroke="#d0d0d0"/>
<text x="732" y="497" textLength="22" lengthAdjust="spacingAndGlyphs">leng</text><text x="760" y="497" textLength="28" lengthAdjust="spacingAndGlyphs">Ln : 1</text><text x="800" y="497" textLength="39" lengthAdjust="spacingAndGlyphs">Col : 36</text><text x="851" y="497" textLength="46" lengthAdjust="spacingAndGlyphs">Sel : 0 | 0</text><text x="1020" y="497" textLength="90" lengthAdjust="spacingAndGlyphs">Windows (CR LF)</text><text x="1131" y="497" textLength="31" lengthAdjust="spacingAndGlyphs">UTF-8</text><text x="1250" y="497" textLength="18" lengthAdjust="spacingAndGlyphs">INS</text>
<path d="M1293,491h2v2h-2zM1289,495h2v2h-2zM1293,495h2v2h-2zM1285,499h2v2h-2zM1289,499h2v2h-2zM1293,499h2v2h-2z" fill="#b0b0b0"/>
<rect x="730.500" y="251.500" width="566" height="252" fill="none" stroke="#7a7a7a"/>
</g>
<polygon fill="none" stroke="#333" points="0.500,1.500 1430,1.500 1444,13 1432,22 1446,33 1441,47 1446,73 1434,90 1444,107 1439,130 1448,150 1442,163 1449,182 1442,193 1453,202 1443,208 1447,220 1451,223 1444,232 1442,245 1444,253 1432,260 1433,275 1443,283 1434,297 1435,307 1438,312 1437,320 1445,326 1449,333 1431,343 1437,348 1437,357 1433,363 1440,368 1448,373 1447,382 1435,390 1431,398 1433,408 1432,413 1447,423 1433,432 1446,442 1432,453 1452,463 1453,482 1450,487 1443,500 1447,513 1437,527 1433,537 1437,550 1447,570 1439,580 1448,593 1430,603 1435,630 1443,640 1445,657 1430,670 1430,683 1453,702 1434,713 1435,723 1448,733 1450,742 1430,750 1432,767 1448,772 1431,779 1430,800 1423,792 1410,792 1400,800 1388,790 1380,798 1368,791 1348,791 1317,795 1295,797 1287,805 1280,803 1240,790 1200,797 1160,791 1120,798 1080,790 1040,796 1000,788 960,797 920,790 900,797 867,789 855,781 832,795 815,795 769,790 740,795 706,791 683,790 652,797 640,785 626,805 597,798 557,792 540,800 511,793 476,792 459,802 436,795 413,788 379,797 344,791 333,799 327,790 293,800 276,797 241,795 221,787 195,798 161,798 132,797 109,798 86,799 57,797 46,788 23,787 0.500,783"/>
</svg>
</body></html>
